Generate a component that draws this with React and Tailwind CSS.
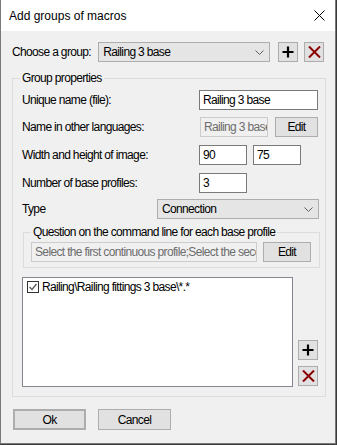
const font = "font-['Liberation_Sans',Arial,sans-serif]";

function PlusIcon() {
  return (
    <svg width="12" height="12" viewBox="0 0 12 12">
      <path d="M6 0.5V11.5M0.5 6H11.5" stroke="#000" strokeWidth="2.2" />
    </svg>
  );
}

function CrossIcon() {
  return (
    <svg width="13" height="12" viewBox="0 0 13 12">
      <path d="M1 0.5L12 11.5M12 0.5L1 11.5" stroke="#8b0000" strokeWidth="2" />
    </svg>
  );
}

function Chevron() {
  return (
    <svg width="9" height="5" viewBox="0 0 9 5">
      <path d="M0.5 0.5L4.5 4.5L8.5 0.5" stroke="#606060" fill="none" strokeWidth="1" />
    </svg>
  );
}

function IconButton({ children }) {
  return (
    <button className="flex h-[20px] w-[20px] items-center justify-center border border-[#adadad] bg-[#e1e1e1]">
      {children}
    </button>
  );
}

function Field({ value, className = '', disabled }) {
  return (
    <div
      className={`flex h-[20px] items-center overflow-hidden whitespace-nowrap border px-[3px] ${
        disabled ? 'border-[#cccccc] bg-[#f0f0f0] text-[#6d6d6d]' : 'border-[#7a7a7a] bg-white text-black'
      } ${className}`}
    >
      {value}
    </div>
  );
}

function Combo({ value, className = '' }) {
  return (
    <div className={`flex h-[20px] items-center justify-between border border-[#adadad] bg-[#e5e5e5] pl-[4px] pr-[5px] ${className}`}>
      <span className="whitespace-nowrap">{value}</span>
      <Chevron />
    </div>
  );
}

function Button({ children, className = '' }) {
  return (
    <button className={`flex h-[20px] items-center justify-center border border-[#adadad] bg-[#e1e1e1] ${className}`}>
      {children}
    </button>
  );
}

export default function App() {
  return (
    <div className={`h-[445px] w-[337px] bg-[#3a3a3a] ${font} text-[12px] leading-none tracking-[-0.65px] text-black`}>
      <div className="h-[444px] w-[336px] border-l border-r border-b border-[#7a7a7a] bg-[#f0f0f0]">
        <div className="flex h-[31px] items-center justify-between bg-white pl-[8px] pr-[10px]">
          <span className="text-[12px] tracking-normal">Add groups of macros</span>
          <svg width="11" height="11" viewBox="0 0 11 11">
            <path d="M0.5 0.5L10.5 10.5M10.5 0.5L0.5 10.5" stroke="#000" strokeWidth="1" />
          </svg>
        </div>

        <div className="px-[11px] whitespace-nowrap">
          <div className="mt-[11px] flex h-[20px] items-center">
            <span className="w-[87px]">Choose a group:</span>
            <Combo value="Railing 3 base" className="w-[173px]" />
            <div className="ml-[8px]">
              <IconButton>
                <PlusIcon />
              </IconButton>
            </div>
            <div className="ml-[6px]">
              <IconButton>
                <CrossIcon />
              </IconButton>
            </div>
          </div>

          <div className="relative mt-[16px] w-[314px] border border-[#dcdcdc] pl-[9px] pt-[11px] pb-[9px]">
            <span className="absolute left-[7px] top-[-7px] bg-[#f0f0f0] px-[2px]">Group properties</span>

            <div className="flex h-[20px] items-center">
              <span className="w-[177px]">Unique name (file):</span>
              <Field value="Railing 3 base" className="w-[119px]" />
            </div>

            <div className="mt-[7px] flex h-[20px] items-center">
              <span className="w-[178px]">Name in other languages:</span>
              <Field value="Railing 3 base" className="w-[68px]" disabled />
              <Button className="ml-[7px] w-[43px]">Edit</Button>
            </div>

            <div className="mt-[8px] flex h-[20px] items-center">
              <span className="w-[177px]">Width and height of image:</span>
              <Field value="90" className="w-[48px]" />
              <Field value="75" className="ml-[6px] w-[48px]" />
            </div>

            <div className="mt-[8px] flex h-[20px] items-center">
              <span className="w-[177px]">Number of base profiles:</span>
              <Field value="3" className="w-[48px]" />
            </div>

            <div className="mt-[6px] flex h-[20px] items-center">
              <span className="w-[135px]">Type</span>
              <Combo value="Connection" className="w-[162px]" />
            </div>

            <div className="relative ml-[1px] mt-[13px] w-[297px] border border-[#dcdcdc] pl-[7px] pt-[9px] pb-[5px]">
              <span className="absolute left-[7px] top-[-7px] bg-[#f0f0f0] px-[2px]">
                Question on the command line for each base profile
              </span>
              <div className="flex h-[20px] items-center">
                <Field value="Select the first continuous profile;Select the second continuous profile" className="w-[226px]" disabled />
                <Button className="ml-[6px] w-[48px]">Edit</Button>
              </div>
            </div>

            <div className="mt-[9px] flex items-end">
              <div className="h-[110px] w-[271px] border border-[#828790] bg-white pl-[4px] pt-[3px]">
                <div className="flex items-center">
                  <div className="flex h-[12px] w-[12px] items-center justify-center border border-[#333333] bg-white">
                    <svg width="10" height="10" viewBox="0 0 10 10">
                      <path d="M1.5 5L4 7.5L8.5 2" stroke="#5a5a5a" strokeWidth="1.3" fill="none" />
                    </svg>
                  </div>
                  <span className="ml-[3px]">Railing\Railing fittings 3 base\*.*</span>
                </div>
              </div>
              <div className="mb-[1px] ml-[5px] flex flex-col gap-[6px]">
                <IconButton>
                  <PlusIcon />
                </IconButton>
                <IconButton>
                  <CrossIcon />
                </IconButton>
              </div>
            </div>
          </div>

          <div className="mt-[12px] flex">
            <Button className="ml-[1px] h-[21px] w-[73px] border-2 border-[#0078d7]">Ok</Button>
            <Button className="ml-[12px] h-[21px] w-[73px]">Cancel</Button>
          </div>
        </div>
      </div>
    </div>
  );
}
